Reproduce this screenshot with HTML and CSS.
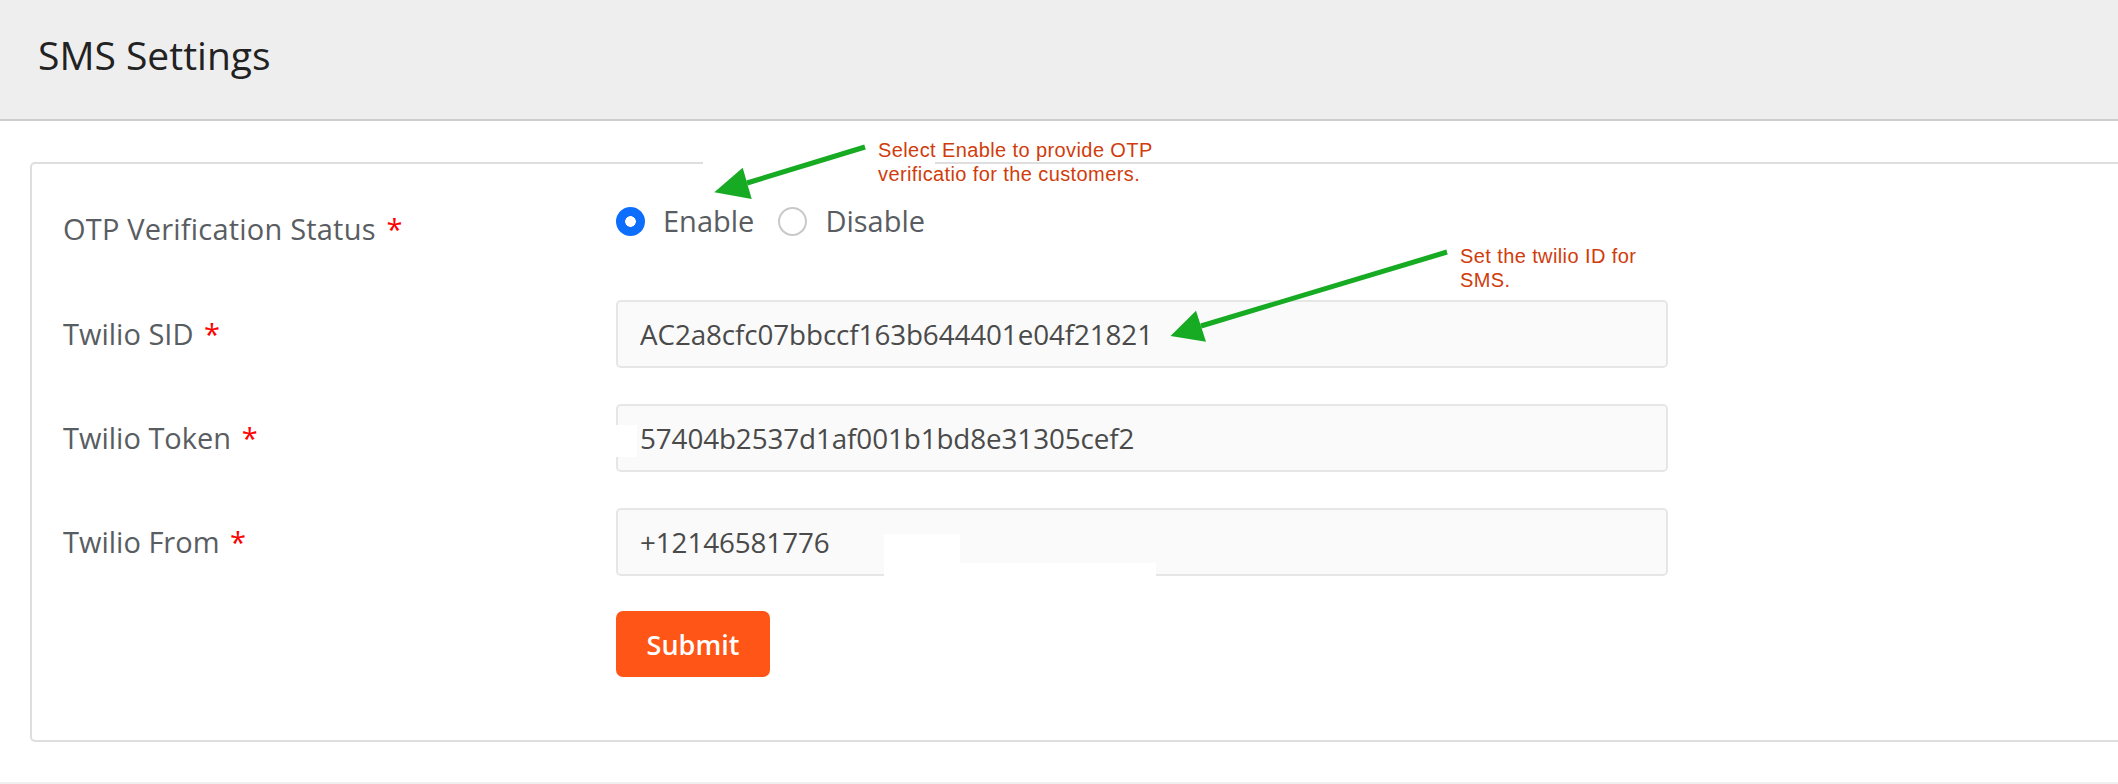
FILE: index.html
```html
<!DOCTYPE html>
<html lang="en">
<head>
<meta charset="utf-8">
<title>SMS Settings</title>
<link rel="stylesheet" href="styles.css">
</head>
<body>
<div class="page">
  <header class="page-header">
    <h1 class="page-title">SMS Settings</h1>
  </header>

  <main class="content">
    <form class="card">
      <div class="form-row row-status">
        <label class="form-label label-status">OTP Verification Status <span class="req">*</span></label>
        <div class="radio-group">
          <label class="radio"><span class="radio-dot checked"></span>Enable</label>
          <label class="radio"><span class="radio-dot"></span>Disable</label>
        </div>
      </div>

      <div class="form-row row-field">
        <label class="form-label">Twilio SID <span class="req">*</span></label>
        <input class="form-control" type="text" value="AC2a8cfc07bbccf163b644401e04f21821" readonly>
      </div>

      <div class="form-row row-field">
        <label class="form-label">Twilio Token <span class="req">*</span></label>
        <input class="form-control" type="text" value="57404b2537d1af001b1bd8e31305cef2" readonly>
      </div>

      <div class="form-row row-field row-last">
        <label class="form-label">Twilio From <span class="req">*</span></label>
        <input class="form-control" type="text" value="+12146581776" readonly>
      </div>

      <div class="form-actions">
        <button class="btn-submit" type="button">Submit</button>
      </div>
    </form>
  </main>

  <div class="page-footer"></div>

  <div class="annotations">
    <div class="patch patch-card-top"></div>
    <div class="patch patch-token"></div>
    <div class="patch patch-from-a"></div>
    <div class="patch patch-from-b"></div>
    <svg class="arrows" width="2118" height="784" viewBox="0 0 2118 784">
      <line x1="865" y1="147" x2="747" y2="183" stroke="#16ab22" stroke-width="5"/>
      <polygon points="742.7,167.7 714.3,192.3 751.7,199" fill="#16ab22"/>
      <line x1="1447" y1="252" x2="1201" y2="326" stroke="#16ab22" stroke-width="5"/>
      <polygon points="1196,310.7 1170.5,336 1206,341.7" fill="#16ab22"/>
    </svg>
    <p class="note note-otp">Select Enable to provide OTP<br>verificatio for the customers.</p>
    <p class="note note-sid">Set the twilio ID for<br>SMS.</p>
  </div>
</div>
</body>
</html>
```

FILE: styles.css
```css
html, body {
  margin: 0;
  padding: 0;
}

body {
  width: 2118px;
  height: 784px;
  overflow: hidden;
  background: #ffffff;
  font-family: "Open Sans", "Noto Sans", sans-serif;
}

.page {
  position: relative;
  width: 2118px;
  height: 784px;
  overflow: hidden;
}

.page-header {
  height: 121px;
  box-sizing: border-box;
  background: #eeeeee;
  border-bottom: 2px solid #cdcdcd;
  padding: 35px 0 0 38px;
}

.page-title {
  margin: 0;
  font-size: 39px;
  line-height: 39px;
  font-weight: 400;
  color: #222222;
}

.content {
  padding: 41px 0 0 30px;
}

.card {
  width: 2200px;
  box-sizing: border-box;
  border: 2px solid #dedede;
  border-radius: 5px;
  padding: 42px 0 63px 31px;
  background: #ffffff;
}

.form-row {
  display: flex;
  align-items: center;
}

.form-label {
  flex: none;
  width: 553px;
  font-size: 29px;
  line-height: 30px;
  color: #595d62;
}

.label-status {
  letter-spacing: 0.2px;
}

.req {
  color: #ff0000;
  margin-left: 3px;
}

.row-status {
  align-items: flex-start;
  margin-bottom: 56px;
}

.label-status {
  margin-top: 8px;
}

.radio-group {
  display: flex;
  align-items: center;
  height: 30px;
  font-size: 29px;
  line-height: 30px;
  color: #595d62;
}

.radio {
  display: flex;
  align-items: center;
  gap: 18px;
  margin-right: 24px;
}

.radio-dot {
  flex: none;
  width: 29px;
  height: 29px;
  box-sizing: border-box;
  border-radius: 50%;
  border: 2px solid #c9c9c9;
  background: #ffffff;
}

.radio-dot.checked {
  border: none;
  background: radial-gradient(circle, #ffffff 0 5px, #0d6efd 5.6px);
}

.row-field {
  margin-bottom: 36px;
}

.row-last {
  margin-bottom: 35px;
}

.form-control {
  flex: none;
  width: 1052px;
  height: 68px;
  box-sizing: border-box;
  border: 2px solid #e6e6e6;
  border-radius: 5px;
  background: #fafafa;
  padding: 0 22px;
  margin: 0;
  font-family: "Open Sans", "Noto Sans", sans-serif;
  font-size: 27.8px;
  letter-spacing: -0.1px;
  color: #4a4a4a;
  outline: none;
}

.form-actions {
  padding-left: 553px;
  display: flex;
}

.btn-submit {
  width: 154px;
  height: 66px;
  border: none;
  border-radius: 7px;
  background: #ff5516;
  color: #ffffff;
  font-family: "Open Sans", "Noto Sans", sans-serif;
  font-size: 27px;
  font-weight: 600;
  padding: 0;
  cursor: pointer;
}

.page-footer {
  margin-top: 40px;
  height: 2px;
  background: #efefef;
}

/* annotation overlay (drawn over the screenshot) */
.annotations {
  position: absolute;
  left: 0;
  top: 0;
  width: 2118px;
  height: 784px;
  pointer-events: none;
}

.arrows {
  position: absolute;
  left: 0;
  top: 0;
}

.patch {
  position: absolute;
  background: #ffffff;
}

.patch-card-top {
  left: 703px;
  top: 159px;
  width: 232px;
  height: 6px;
}

.patch-token {
  left: 614px;
  top: 425px;
  width: 23px;
  height: 32px;
}

.patch-from-a {
  left: 884px;
  top: 534px;
  width: 76px;
  height: 45px;
}

.patch-from-b {
  left: 949px;
  top: 563px;
  width: 207px;
  height: 16px;
}

.note {
  position: absolute;
  margin: 0;
  font-family: "Liberation Sans", Arial, sans-serif;
  font-size: 20px;
  line-height: 24px;
  letter-spacing: 0.4px;
  color: #d03c0c;
  white-space: nowrap;
}

.note-otp {
  left: 878px;
  top: 138px;
}

.note-sid {
  left: 1460px;
  top: 244px;
}
```
